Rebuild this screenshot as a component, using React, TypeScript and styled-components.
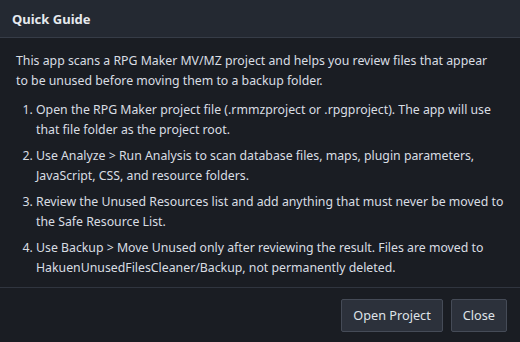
import React from 'react';
import styled, {createGlobalStyle} from "styled-components";

const GlobalStyle = createGlobalStyle`
  html, body {
    margin: 0;
    padding: 0;
    background: #1a1d23;
  }
  body {
    font-family: "Noto Sans", "Open Sans", sans-serif;
  }
`

// lines are broken where the original dialog wraps them
const intro = [
    'This app scans a RPG Maker MV/MZ project and helps you review files that appear',
    'to be unused before moving them to a backup folder.',
]

const steps = [
    [
        'Open the RPG Maker project file (.rmmzproject or .rpgproject). The app will use',
        'that file folder as the project root.',
    ],
    [
        'Use Analyze > Run Analysis to scan database files, maps, plugin parameters,',
        'JavaScript, CSS, and resource folders.',
    ],
    [
        'Review the Unused Resources list and add anything that must never be moved to',
        'the Safe Resource List.',
    ],
    [
        'Use Backup > Move Unused only after reviewing the result. Files are moved to',
        'HakuenUnusedFilesCleaner/Backup, not permanently deleted.',
    ],
]

const Lines: React.FC<{ lines: string[] }> = ({lines}) => (
    <>
        {lines.map((l, i) => (
            <React.Fragment key={i}>
                {i > 0 && <br/>}
                {l}
            </React.Fragment>
        ))}
    </>
)

const App: React.FC = () => {
    return (
        <>
            <GlobalStyle/>
            <Dialog>
                <Header>
                    <Title>Quick Guide</Title>
                </Header>
                <Body>
                    <Intro><Lines lines={intro}/></Intro>
                    <Steps>
                        {steps.map((s, i) => (
                            <Step key={i}><Lines lines={s}/></Step>
                        ))}
                    </Steps>
                </Body>
                <Footer>
                    <Button>Open Project</Button>
                    <Button>Close</Button>
                </Footer>
            </Dialog>
        </>
    );
}

export default App;

const Dialog = styled.div`
  width: 520px;
  height: 342px;
  display: flex;
  flex-direction: column;
  background: #1a1d23;
  color: #d9dde3;
  box-sizing: border-box;
`

const Header = styled.div`
  height: 37px;
  display: flex;
  align-items: center;
  padding: 0 12px;
  background: #242932;
  border-bottom: 1px solid #363c47;
`

const Title = styled.h1`
  margin: 0;
  font-size: 13px;
  font-weight: 700;
  color: #e6e9ee;
`

const Body = styled.div`
  flex: 1;
  padding: 13px 16px 0 16px;
  font-size: 12.3px;
  line-height: 20px;
  white-space: nowrap;
`

const Intro = styled.p`
  margin: 0 0 9px 0;
`

const Steps = styled.ol`
  margin: 0;
  padding-left: 20px;
  display: flex;
  flex-direction: column;
  gap: 6px;
`

const Step = styled.li`
  padding-left: 0;
`

const Footer = styled.div`
  height: 55px;
  box-sizing: border-box;
  border-top: 1px solid #30353f;
  display: flex;
  justify-content: flex-end;
  align-items: center;
  gap: 8px;
  padding: 0 13px;
`

const Button = styled.button`
  height: 33px;
  padding: 0 11px;
  font-family: inherit;
  font-size: 12.7px;
  color: #dfe3e8;
  background: #2c313b;
  border: 1px solid #454b57;
  border-radius: 2px;
  cursor: pointer;
`
